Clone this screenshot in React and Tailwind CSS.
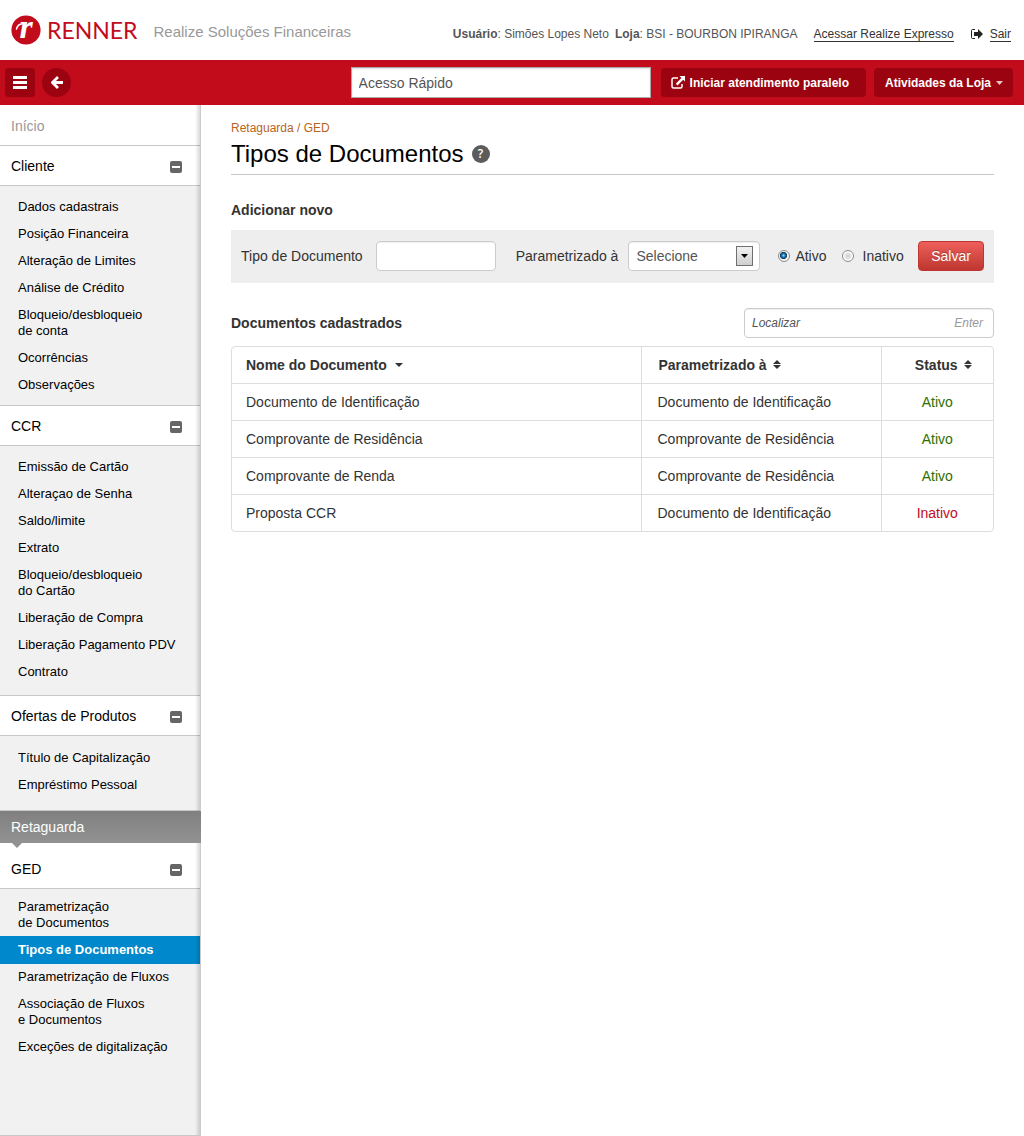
import React from "react";

const sections = [
  {
    title: "Cliente",
    body: "pt-[13px] pb-3",
    items: [
      "Dados cadastrais",
      "Posição Financeira",
      "Alteração de Limites",
      "Análise de Crédito",
      "Bloqueio/desbloqueio\nde conta",
      "Ocorrências",
      "Observações",
    ],
  },
  {
    title: "CCR",
    body: "pt-[13px] pb-[15px]",
    items: [
      "Emissão de Cartão",
      "Alteraçao de Senha",
      "Saldo/limite",
      "Extrato",
      "Bloqueio/desbloqueio\ndo Cartão",
      "Liberação de Compra",
      "Liberação Pagamento PDV",
      "Contrato",
    ],
  },
  {
    title: "Ofertas de Produtos",
    body: "pt-[14px] pb-[17px]",
    items: ["Título de Capitalização", "Empréstimo Pessoal"],
  },
];

const ged = [
  "Parametrização\nde Documentos",
  "Tipos de Documentos",
  "Parametrização de Fluxos",
  "Associação de Fluxos\ne Documentos",
  "Exceções de digitalização",
];

const rows = [
  ["Documento de Identificação", "Documento de Identificação", "Ativo"],
  ["Comprovante de Residência", "Comprovante de Residência", "Ativo"],
  ["Comprovante de Renda", "Comprovante de Residência", "Ativo"],
  ["Proposta CCR", "Documento de Identificação", "Inativo"],
];

function Logo() {
  return (
    <a href="#" aria-label="Renner" className="flex items-center text-[#c20b1b]">
      <svg width="30" height="30" viewBox="0 0 30 30" className="overflow-visible" aria-hidden="true">
        <circle cx="15" cy="15" r="14.6" fill="#c20b1b" />
        <text
          x="15"
          y="23"
          textAnchor="middle"
          fill="#fff"
          fontFamily="'Liberation Serif', serif"
          fontWeight="700"
          fontStyle="italic"
          fontSize="34"
        >
          r
        </text>
        <path d="M5.500 14c.8-3 2.500-5 6-5.200" fill="none" stroke="#fff" strokeWidth="1.500" strokeLinecap="round" />
      </svg>
      <span className="ml-1.5 font-['Lato',sans-serif] text-[23px] leading-[30px]">RENNER</span>
    </a>
  );
}

function SectionHeader({ title }) {
  return (
    <button type="button" className="flex h-10 w-full items-center justify-between border-b border-[#c8c8c8] bg-white pl-[11px] pr-[19px] pt-px text-sm text-black">
      <span>{title}</span>
      <svg width="12" height="12" viewBox="0 0 12 12" className="mt-px" aria-hidden="true">
        <rect width="12" height="12" rx="2" fill="#666" />
        <rect x="2" y="5" width="8" height="2" fill="#fff" />
      </svg>
    </button>
  );
}

function MenuList({ items, active, className }) {
  return (
    <ul className={"flex flex-col gap-[11px] text-[13px] leading-4 text-black " + className}>
      {items.map((item) =>
        item === active ? (
          <li key={item} className="-my-1.5 mr-px bg-[#0088cc] py-1.5 pl-[18px] font-bold text-white">
            <a href="#" aria-current="page">{item}</a>
          </li>
        ) : (
          <li key={item} className="whitespace-pre-line pl-[18px]">
            <a href="#">{item}</a>
          </li>
        )
      )}
    </ul>
  );
}

function Sidebar() {
  return (
    <nav className="relative w-[201px] shrink-0 border-b border-[#c8c8c8] bg-[#f1f1f1]">
      <a href="#" className="flex h-[41px] items-center border-b border-[#c8c8c8] bg-white pl-[11px] pt-px text-sm text-[#999]">
        Início
      </a>
      {sections.map((s) => (
        <section key={s.title} className="border-b border-[#c8c8c8]">
          <SectionHeader title={s.title} />
          <MenuList items={s.items} className={s.body} />
        </section>
      ))}
      <div className="relative z-10 flex h-8 items-center bg-linear-to-b from-[#808080] to-[#929292] pl-[11px] text-sm text-white">
        Retaguarda
        <svg width="10" height="5" viewBox="0 0 10 5" className="absolute left-3 top-full" aria-hidden="true">
          <path d="M0 0h10L5 5z" fill="#929292" />
        </svg>
      </div>
      <section>
        <div className="bg-white pt-[6px]">
          <SectionHeader title="GED" />
        </div>
        <MenuList items={ged} active="Tipos de Documentos" className="pt-2.5 pb-20" />
      </section>
      <div className="pointer-events-none absolute inset-y-0 right-0 w-1.5 border-r border-[#ccc] bg-linear-to-r from-transparent to-black/15" />
    </nav>
  );
}

function SortIcon() {
  return (
    <svg width="8" height="9" viewBox="0 0 8 9" aria-hidden="true">
      <path d="M0 4 4 0l4 4zM0 5h8L4 9z" fill="#333" />
    </svg>
  );
}

function Radio({ label, gap, defaultChecked }) {
  return (
    <label className={"flex items-center " + gap}>
      <input
        type="radio"
        name="status"
        defaultChecked={defaultChecked}
        className="size-3 appearance-none rounded-full border border-[#8a8a8a] bg-[radial-gradient(circle,#d4d4d4_0,#e2e2e2_40%,#fff_60%)] checked:bg-[radial-gradient(circle_at_45%_45%,#8fdcf5_0,#1a78b5_22%,#123a5c_42%,#f4f4f4_50%)]"
      />
      {label}
    </label>
  );
}

export default function App() {
  return (
    <div className="flex min-h-screen flex-col bg-white font-['Liberation_Sans',Arial,sans-serif] text-sm text-[#333]">
      <header className="flex h-[60px] shrink-0 items-center justify-between pl-[11px] pr-[13px]">
        <div className="flex items-center">
          <Logo />
          <span className="ml-4 whitespace-nowrap pt-1 text-[15px] leading-6 text-[#999]">
            Realize Soluções Financeiras
          </span>
        </div>
        <div className="flex items-center whitespace-nowrap pt-2 text-xs text-[#555]">
          <span><b>Usuário</b>: Simões Lopes Neto</span>
          <span className="ml-1.5"><b>Loja</b>: BSI - BOURBON IPIRANGA</span>
          <a href="#" className="ml-4 border-b border-[#333] leading-[14px] text-[#333]">Acessar Realize Expresso</a>
          <a href="#" className="ml-[17px] flex items-center gap-[7px] text-[#333]">
            <svg width="12" height="10" viewBox="0 0 12 10" aria-hidden="true">
              <path d="M4 .5H1.500a1 1 0 0 0-1 1v7a1 1 0 0 0 1 1H4" fill="none" stroke="#222" />
              <path d="M3 3h4V0l5 5-5 5V7H3z" fill="#222" />
            </svg>
            <span className="border-b border-[#333] leading-[14px]">Sair</span>
          </a>
        </div>
      </header>

      <div className="flex h-[45px] shrink-0 items-center bg-[#c20b1b] pl-[5px] pr-[11px] text-xs font-bold text-white">
        <button type="button" aria-label="Menu" className="flex h-[29px] w-[30px] items-center justify-center rounded-sm bg-[#9c0310]">
          <svg width="14" height="13" viewBox="0 0 14 13" aria-hidden="true">
            <path d="M0 0h14v3H0zM0 5h14v3H0zM0 10h14v3H0z" fill="#fff" />
          </svg>
        </button>
        <button type="button" aria-label="Voltar" className="ml-[7px] flex size-[29px] items-center justify-center rounded-full bg-[#9c0310]">
          <svg width="12" height="13" viewBox="0 0 12 13" aria-hidden="true">
            <path d="M7 1 1.500 6.500 7 12M2 6.500h10" fill="none" stroke="#fff" strokeWidth="2.800" />
          </svg>
        </button>
        <input
          aria-label="Acesso Rápido"
          placeholder="Acesso Rápido"
          className="ml-auto h-[31px] w-[300px] border border-[#aaa] bg-white px-[7px] text-sm font-normal text-[#555] shadow-[inset_0_1px_2px_#ddd] placeholder:text-[#555]"
        />
        <button type="button" className="ml-2.5 flex h-[29px] items-center gap-[5px] whitespace-nowrap rounded-sm bg-[#9c0310] pl-2.5 pr-[17px]">
          <svg width="14" height="13" viewBox="0 0 14 13" aria-hidden="true">
            <path d="M7 2H2.500a1.500 1.500 0 0 0-1.500 1.500v7A1.500 1.500 0 0 0 2.500 12h7a1.500 1.500 0 0 0 1.500-1.500V8" fill="none" stroke="#fff" strokeWidth="1.500" />
            <path d="M8.500 0H14v5.500L12.200 3.700 6.500 9.400 4.800 7.700l5.600-5.800z" fill="#fff" />
          </svg>
          Iniciar atendimento paralelo
        </button>
        <button type="button" className="ml-2 flex h-[29px] items-center gap-[5px] whitespace-nowrap rounded-sm bg-[#9c0310] pl-[11px] pr-2.5">
          Atividades da Loja
          <svg width="7" height="4" viewBox="0 0 7 4" aria-hidden="true">
            <path d="M0 0h7L3.500 4z" fill="#e8c4c8" />
          </svg>
        </button>
      </div>

      <div className="flex grow">
        <Sidebar />
        <main className="min-w-0 grow px-[30px] pt-[15px]">
          <p className="text-xs leading-4 text-[#b8651b]">
            <a href="#">Retaguarda</a> / <a href="#">GED</a>
          </p>
          <div className="flex h-[39px] items-center gap-2 border-b border-[#c8c8c8] pb-0.5">
            <h1 className="text-2xl leading-8 text-black">Tipos de Documentos</h1>
            <button type="button" aria-label="Ajuda" className="flex size-[18px] items-center justify-center rounded-full bg-[#5c5c5c] font-['Open_Sans',sans-serif] text-xs font-semibold text-white">
              ?
            </button>
          </div>

          <h2 className="mt-[25px] font-bold leading-5">Adicionar novo</h2>
          <form className="mt-[10px] flex h-[53px] items-center whitespace-nowrap bg-[#eee] px-2.5 pb-0.5" onSubmit={(e) => e.preventDefault()}>
            <label htmlFor="tipo">Tipo de Documento</label>
            <input id="tipo" className="ml-[13px] h-[30px] w-[120px] rounded-[4px] border border-[#ccc] bg-white px-2 shadow-[inset_0_1px_1px_#eee]" />
            <label htmlFor="param" className="ml-5">Parametrizado à</label>
            <div className="relative ml-2.5">
              <select id="param" className="block h-[30px] w-[132px] appearance-none rounded-[4px] border border-[#ccc] bg-white px-[7px] text-[#555] shadow-[inset_0_1px_1px_#eee]">
                <option>Selecione</option>
                <option>Documento de Identificação</option>
                <option>Comprovante de Residência</option>
              </select>
              <span className="pointer-events-none absolute right-[7px] top-[5px] flex h-5 w-[17px] items-center justify-center border border-[#707070] bg-linear-to-b from-[#f2f2f2] to-[#cfcfcf]">
                <svg width="7" height="4" viewBox="0 0 7 4" aria-hidden="true">
                  <path d="M0 0h7L3.500 4z" fill="#000" />
                </svg>
              </span>
            </div>
            <div className="ml-[18px] flex gap-[15px]">
              <Radio label="Ativo" gap="gap-[5px]" defaultChecked />
              <Radio label="Inativo" gap="gap-[9px]" />
            </div>
            <button type="submit" className="ml-auto h-[30px] w-[66px] rounded-[4px] border border-[#bd362f] bg-linear-to-b from-[#ee5f5b] to-[#bd362f] text-white [text-shadow:0_-1px_0_#00000040]">
              Salvar
            </button>
          </form>

          <div className="mt-[25px] flex items-center justify-between">
            <h2 className="font-bold">Documentos cadastrados</h2>
            <div className="flex h-[30px] w-[250px] items-center justify-between rounded-[4px] border border-[#ccc] bg-white pl-[7px] pr-2.5 text-xs italic shadow-[inset_0_1px_1px_#eee]">
              <input aria-label="Localizar" placeholder="Localizar" className="min-w-0 grow italic outline-none placeholder:text-[#555]" />
              <span className="text-[#999]">Enter</span>
            </div>
          </div>

          <div className="mt-2 overflow-hidden rounded-[4px] border border-[#ddd]">
            <table className="w-full table-fixed border-collapse">
              <colgroup>
                <col />
                <col className="w-[240px]" />
                <col className="w-[112px]" />
              </colgroup>
              <thead>
                <tr className="h-9 text-left">
                  <th scope="col" className="px-3.5">
                    <button type="button" className="flex items-center gap-2">
                      Nome do Documento
                      <svg width="8" height="4" viewBox="0 0 8 4" className="mt-px" aria-hidden="true">
                        <path d="M0 0h8L4 4z" fill="#333" />
                      </svg>
                    </button>
                  </th>
                  <th scope="col" className="border-l border-[#ddd] px-[17px]">
                    <button type="button" className="flex items-center gap-1.5">
                      Parametrizado à
                      <SortIcon />
                    </button>
                  </th>
                  <th scope="col" className="border-l border-[#ddd] pl-3">
                    <button type="button" className="mx-auto flex items-center gap-1.5">
                      Status
                      <SortIcon />
                    </button>
                  </th>
                </tr>
              </thead>
              <tbody>
                {rows.map(([name, param, status]) => (
                  <tr key={name} className="h-[37px] border-t border-[#ddd]">
                    <td className="px-3.5">{name}</td>
                    <td className="border-l border-[#ddd] px-4">{param}</td>
                    <td className={"border-l border-[#ddd] text-center " + (status === "Ativo" ? "text-[#2f6f00]" : "text-[#c20b1b]")}>
                      {status}
                    </td>
                  </tr>
                ))}
              </tbody>
            </table>
          </div>
        </main>
      </div>
    </div>
  );
}
